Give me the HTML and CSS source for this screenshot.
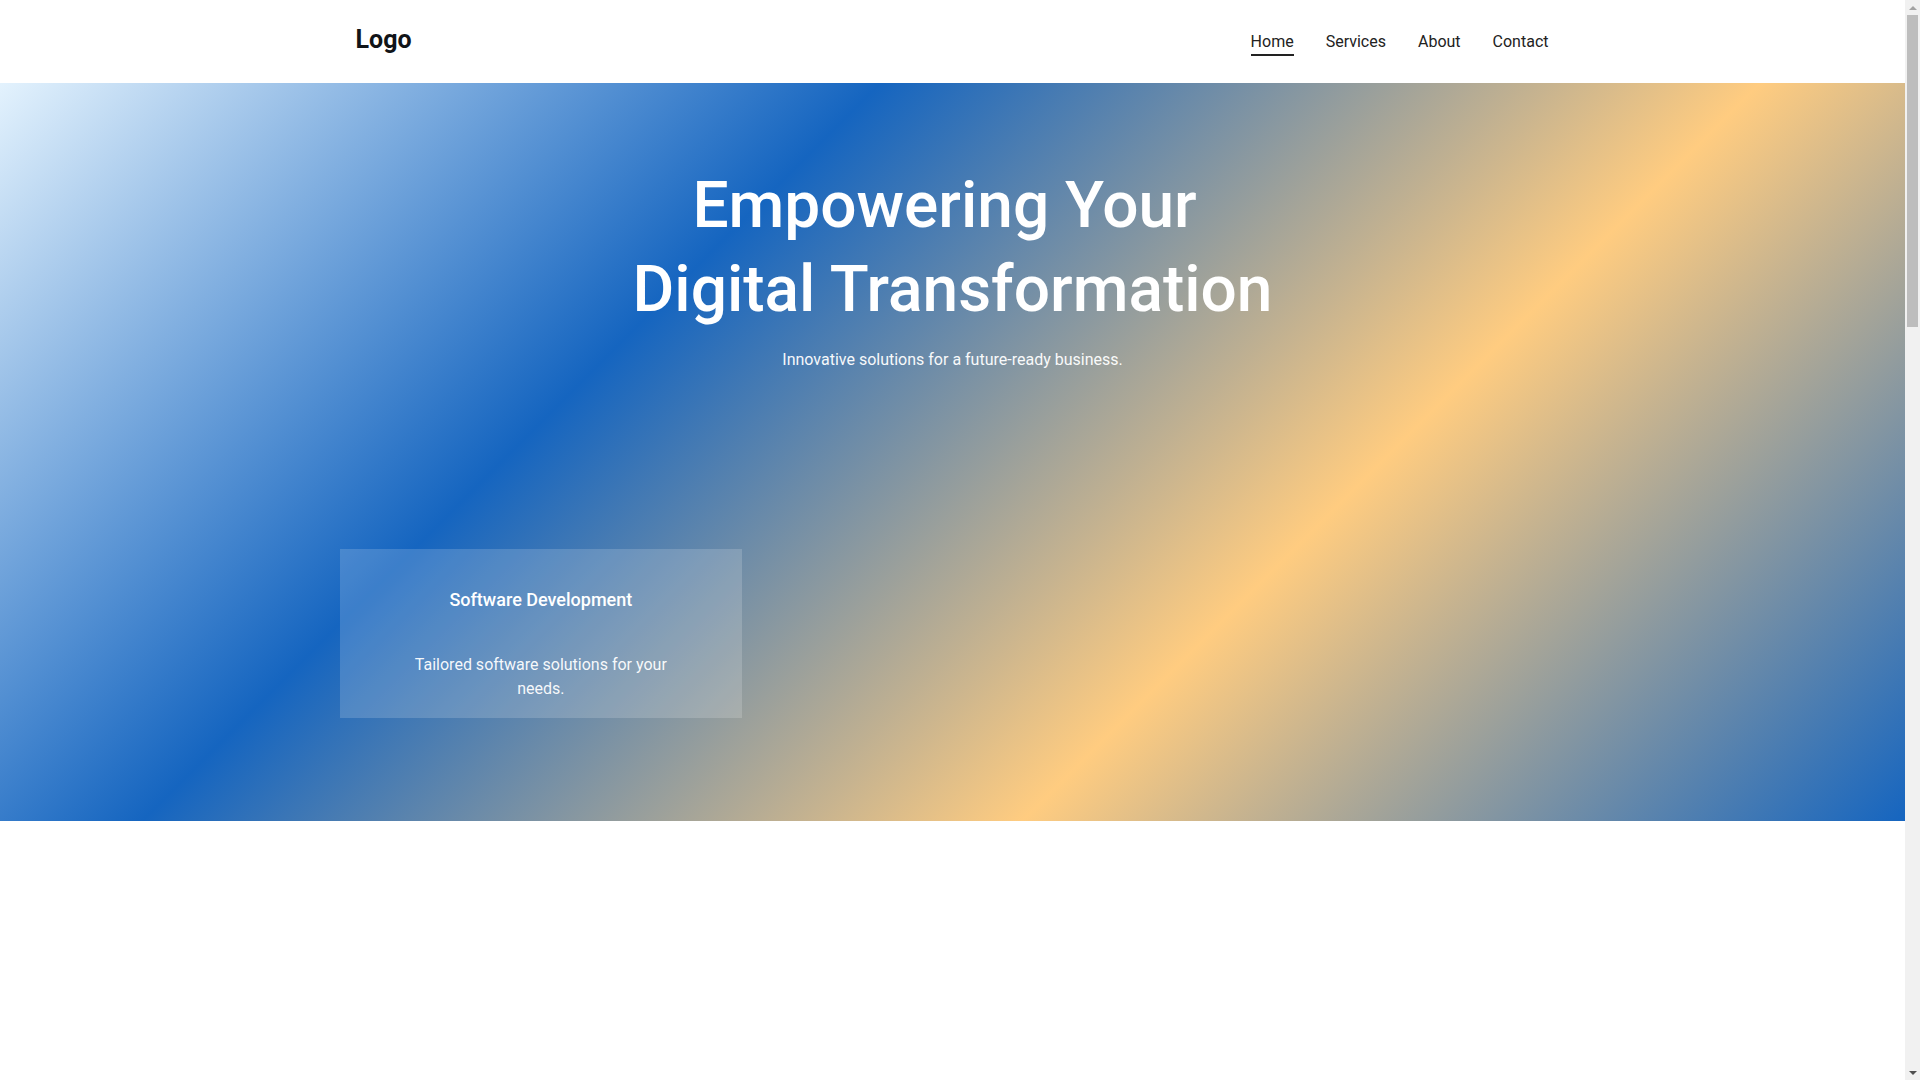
FILE: index.html
```html
<!DOCTYPE html>
<html lang="en">
<head>
<meta charset="utf-8">
<title>Digital Transformation</title>
<link rel="stylesheet" href="styles.css">
</head>
<body>
<div class="page">
  <header class="site-header">
    <div class="container header-inner">
      <div class="logo">Logo</div>
      <nav class="nav">
        <a class="nav-link active" href="#">Home</a>
        <a class="nav-link" href="#">Services</a>
        <a class="nav-link" href="#">About</a>
        <a class="nav-link" href="#">Contact</a>
      </nav>
    </div>
  </header>
  <section class="hero">
    <div class="hero-text">
      <h1 class="hero-title">Empowering Your&nbsp;<br>Digital Transformation</h1>
      <p class="hero-sub">Innovative solutions for a future-ready business.</p>
    </div>
    <div class="cards">
      <div class="card">
        <h3 class="card-title">Software Development</h3>
        <p class="card-text">Tailored software solutions for your needs.</p>
      </div>
    </div>
  </section>
  <section class="below"></section>
</div>
<div class="scrollbar" aria-hidden="true">
  <div class="sb-btn sb-up"><span class="sb-arrow-up"></span></div>
  <div class="sb-track"><div class="sb-thumb"></div></div>
  <div class="sb-btn sb-down"><span class="sb-arrow-down"></span></div>
</div>
</body>
</html>
```
FILE: styles.css
```css
* { box-sizing: border-box; }
html, body { margin: 0; padding: 0; }
body {
  font-family: Roboto, "Liberation Sans", Arial, sans-serif;
  background: #ffffff;
  color: #222;
}
.page {
  margin-right: 15px;
}
.container {
  max-width: 1230px;
  margin: 0 auto;
  padding: 0 15px;
}
.site-header {
  background: #ffffff;
  height: 83px;
}
.header-inner {
  height: 100%;
  display: flex;
  align-items: center;
  justify-content: space-between;
}
.logo {
  font-size: 25px;
  font-weight: 700;
  color: #111418;
  margin-top: -5px;
  margin-left: 3px;
}
.nav {
  display: flex;
  gap: 32px;
  padding-right: 4px;
}
.nav-link {
  font-size: 16px;
  color: #222;
  text-decoration: none;
  line-height: 24px;
  padding-bottom: 0;
  border-bottom: 2px solid transparent;
  margin-top: 3px;
}
.nav-link.active {
  border-bottom-color: #222;
}
.hero {
  background: linear-gradient(135deg, #e3f2fd 0%, #1565c0 33.3%, #ffcc80 66.6%, #1565c0 100%);
  height: 738px;
  padding-top: 81px;
  color: #fff;
}
.hero-text {
  text-align: center;
}
.hero-title {
  margin: 0;
  font-size: 64px;
  line-height: 84px;
  font-weight: 500;
}
.hero-sub {
  margin: 16px 0 0;
  font-size: 16px;
  line-height: 24px;
  opacity: 0.95;
}
.cards {
  max-width: 1225px;
  margin: 177px auto 0;
  display: grid;
  grid-template-columns: repeat(3, 1fr);
  gap: 10px;
}
.card {
  background: rgba(255, 255, 255, 0.17);
  padding: 37px 56px 17px;
  text-align: center;
}
.card-title {
  margin: 0 0 40px;
  font-size: 18px;
  line-height: 27px;
  font-weight: 500;
}
.card-text {
  margin: 0;
  font-size: 16px;
  line-height: 24px;
  color: rgba(255, 255, 255, 0.95);
}
.below {
  height: 2814px;
  background: #ffffff;
}
.scrollbar {
  position: fixed;
  top: 0;
  right: 0;
  width: 15px;
  height: 100vh;
  background: #f1f1f1;
  display: flex;
  flex-direction: column;
}
.sb-btn {
  height: 15px;
  display: flex;
  align-items: center;
  justify-content: center;
}
.sb-arrow-up {
  width: 0;
  height: 0;
  border-left: 4px solid transparent;
  border-right: 4px solid transparent;
  border-bottom: 4px solid #a3a3a3;
}
.sb-arrow-down {
  width: 0;
  height: 0;
  border-left: 4px solid transparent;
  border-right: 4px solid transparent;
  border-top: 4px solid #505050;
}
.sb-track {
  flex: 1;
  padding: 0 2px;
}
.sb-thumb {
  height: 312px;
  background: #bdbdbd;
}
```
